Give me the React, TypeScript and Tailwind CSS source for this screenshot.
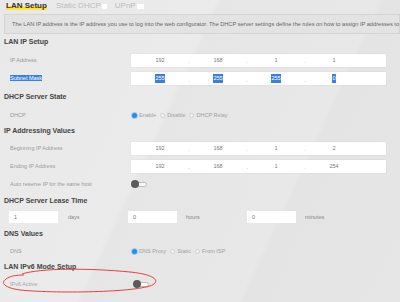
import React from "react";

const font = { fontFamily: '"Liberation Sans", Arial, sans-serif' };

function Heading({ children, h }: { children: React.ReactNode; h: string }) {
  return (
    <div className={`${h} flex items-center pl-[4px] text-[7px] font-bold text-[#444]`}>{children}</div>
  );
}

function Label({ children, hl }: { children: React.ReactNode; hl?: boolean }) {
  return (
    <div className="w-[131px] shrink-0 pl-[10px] text-[5.5px] text-[#9a9a9a]">
      {hl ? <span className="bg-[#3d7fe0] text-white">{children}</span> : children}
    </div>
  );
}

function IpBox({ vals, hl }: { vals: string[]; hl?: boolean }) {
  return (
    <div className="flex h-[13px] w-[255px] items-center bg-white shadow-[0_0_1px_rgba(0,0,0,0.15)]">
      {vals.map((v, i) => (
        <div key={i} className="relative flex h-full w-[58px] items-center justify-center text-[5.5px] text-[#777]">
          {hl ? <span className="bg-[#3d7fe0] text-white">{v}</span> : v}
          {i < 3 && <span className="absolute right-[-1px] bottom-[1px] text-[5px] text-[#777]">.</span>}
        </div>
      ))}
    </div>
  );
}

function Radio({ on, label }: { on?: boolean; label: string }) {
  return (
    <div className="mr-[4px] flex items-center gap-[2px]">
      <span
        className={`inline-block h-[5px] w-[5px] rounded-full ${on ? "bg-[#2c8be8] ring-1 ring-[#a9cdf3]" : "border border-[#cfcfcf] bg-[#f4f4f4]"}`}
      />
      <span className="text-[5.5px] text-[#a0a0a0]">{label}</span>
    </div>
  );
}

function Toggle() {
  return (
    <div className="relative h-[8px] w-[17px]">
      <div className="absolute left-[3px] top-[1.5px] h-[5px] w-[13px] rounded-full border border-[#bbb] bg-[#f7f7f7]" />
      <div className="absolute left-0 top-0 h-[8px] w-[8px] rounded-full bg-[#5a5a5a]" />
    </div>
  );
}

function SmallInput({ v }: { v: string }) {
  return (
    <div className="flex h-[12px] w-[49px] items-center bg-white pl-[5px] text-[5.5px] text-[#777]">{v}</div>
  );
}

export default function App() {
  return (
    <div
      className="relative h-[302px] w-[400px] overflow-hidden bg-[linear-gradient(115deg,#e9e9e9_0%,#ebebeb_40%,#e6e6e6_41%,#e8e8e8_70%,#e4e4e4_71%,#e6e6e6_100%)]"
      style={font}
    >
      {/* tabs */}
      <div className="flex h-[12px] items-center pl-[6px]">
        <span className="bg-[linear-gradient(to_bottom,transparent_50%,#ffe23b_50%,#ffe23b_85%,transparent_85%)] text-[8px] font-bold text-[#333]">
          LAN Setup
        </span>
        <span className="ml-[9px] text-[8px] text-[#bdbdbd]">Static DHCP</span>
        <span className="ml-[1px] inline-block h-[5px] w-[5px] bg-white" />
        <span className="ml-[8px] text-[8px] text-[#bdbdbd]">UPnP</span>
        <span className="ml-[1px] inline-block h-[5px] w-[7px] bg-white" />
      </div>
      {/* info box */}
      <div className="ml-[4px] mt-[2px] flex h-[20px] items-center whitespace-nowrap border border-[#d4d4d4] bg-[#e3e3e3] pl-[7px] text-[5.65px] text-[#666]">
        The LAN IP address is the IP address you use to log into the web configurator. The DHCP server settings define the rules on how to assign IP addresses to
      </div>

      <Heading h="h-[17px]">LAN IP Setup</Heading>
      <div className="flex h-[18px] items-center">
        <Label>IP Address</Label>
        <IpBox vals={["192", "168", "1", "1"]} />
      </div>
      <div className="flex h-[19px] items-center">
        <Label hl>Subnet Mask</Label>
        <IpBox vals={["255", "255", "255", "0"]} hl />
      </div>

      <Heading h="h-[19px]">DHCP Server State</Heading>
      <div className="flex h-[16px] items-center">
        <Label>DHCP</Label>
        <div className="flex items-center pl-[1px]">
          <Radio on label="Enable" />
          <Radio label="Disable" />
          <Radio label="DHCP Relay" />
        </div>
      </div>

      <Heading h="h-[16px]">IP Addressing Values</Heading>
      <div className="flex h-[18px] items-center">
        <Label>Beginning IP Address</Label>
        <IpBox vals={["192", "168", "1", "2"]} />
      </div>
      <div className="flex h-[18px] items-center">
        <Label>Ending IP Address</Label>
        <IpBox vals={["192", "168", "1", "254"]} />
      </div>
      <div className="flex h-[18px] items-center">
        <Label>Auto reserve IP for the same host</Label>
        <Toggle />
      </div>

      <Heading h="h-[16px]">DHCP Server Lease Time</Heading>
      <div className="flex h-[16px] items-center pl-[9px] text-[5.5px] text-[#888]">
        <SmallInput v="1" />
        <span className="ml-[10px] w-[60px]">days</span>
        <SmallInput v="0" />
        <span className="ml-[9px] w-[61px]">hours</span>
        <SmallInput v="0" />
        <span className="ml-[9px]">minutes</span>
      </div>

      <Heading h="h-[18px]">DNS Values</Heading>
      <div className="flex h-[16px] items-center">
        <Label>DNS</Label>
        <div className="flex items-center pl-[1px]">
          <Radio on label="DNS Proxy" />
          <Radio label="Static" />
          <Radio label="From ISP" />
        </div>
      </div>

      <Heading h="h-[16px]">LAN IPv6 Mode Setup</Heading>
      <div className="flex h-[18px] items-center">
        <div className="w-[133px] shrink-0 pl-[10px] text-[5.5px] text-[#a5a5a5]">IPv6 Active</div>
        <Toggle />
      </div>

      {/* red hand-drawn ellipse */}
      <svg className="pointer-events-none absolute left-0 top-0" width="400" height="302" viewBox="0 0 400 302">
        <path
          d="M22 274 C 40 268, 90 268, 130 272 C 150 274, 160 279, 154 284 C 145 292, 60 294, 20 290 C 5 288, 0 283, 6 279 C 10 276, 16 275, 24 275"
          fill="none"
          stroke="#e0302a"
          strokeWidth="0.9"
        />
      </svg>
    </div>
  );
}
